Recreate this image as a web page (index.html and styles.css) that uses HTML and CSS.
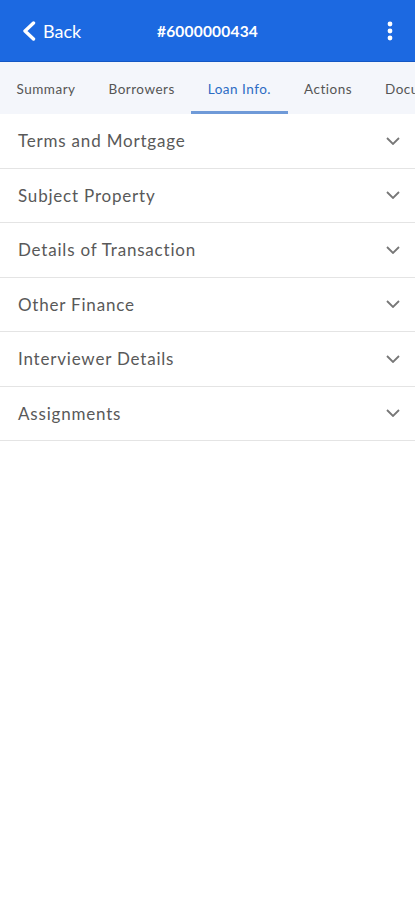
FILE: index.html
```html
<!DOCTYPE html>
<html lang="en">

<head>
    <meta charset="UTF-8">
    <meta name="viewport" content="width=device-width, initial-scale=1.0">
    <link rel="stylesheet" href="styles.css">
    <title>Loan Info</title>
</head>

<body>
    <header class="top-bar">
        <a class="back-link" href="#">
            <svg class="back-icon" width="14" height="20" viewBox="0 0 14 20">
                <path d="M11.5 2 L3 10 L11.5 18" fill="none" stroke="#fff" stroke-width="3.4" stroke-linecap="round" stroke-linejoin="round" />
            </svg>
            <span>Back</span>
        </a>
        <h1 class="loan-number">#6000000434</h1>
        <button class="menu-button" aria-label="More">
            <svg width="6" height="20" viewBox="0 0 6 20">
                <circle cx="3" cy="3" r="2.4" fill="#fff" />
                <circle cx="3" cy="10" r="2.4" fill="#fff" />
                <circle cx="3" cy="17" r="2.4" fill="#fff" />
            </svg>
        </button>
    </header>

    <!-- Tabs -->
    <nav class="tabs">
        <a class="tab" href="#">Summary</a>
        <a class="tab" href="#">Borrowers</a>
        <a class="tab tab-active" href="#">Loan Info.</a>
        <a class="tab" href="#">Actions</a>
        <a class="tab" href="#">Documents</a>
    </nav>

    <!-- Sections -->
    <main class="sections">
        <div class="section-row">
            <span>Terms and Mortgage</span>
            <svg class="chevron" width="14" height="8" viewBox="0 0 14 8"><path d="M1 1 L7 7 L13 1" /></svg>
        </div>
        <div class="section-row">
            <span>Subject Property</span>
            <svg class="chevron" width="14" height="8" viewBox="0 0 14 8"><path d="M1 1 L7 7 L13 1" /></svg>
        </div>
        <div class="section-row">
            <span>Details of Transaction</span>
            <svg class="chevron" width="14" height="8" viewBox="0 0 14 8"><path d="M1 1 L7 7 L13 1" /></svg>
        </div>
        <div class="section-row">
            <span>Other Finance</span>
            <svg class="chevron" width="14" height="8" viewBox="0 0 14 8"><path d="M1 1 L7 7 L13 1" /></svg>
        </div>
        <div class="section-row">
            <span>Interviewer Details</span>
            <svg class="chevron" width="14" height="8" viewBox="0 0 14 8"><path d="M1 1 L7 7 L13 1" /></svg>
        </div>
        <div class="section-row">
            <span>Assignments</span>
            <svg class="chevron" width="14" height="8" viewBox="0 0 14 8"><path d="M1 1 L7 7 L13 1" /></svg>
        </div>
    </main>
</body>

</html>
```

FILE: styles.css
```css
body {
    font-family: 'Lato', 'Open Sans', sans-serif;
    background: #fff;
    margin: 0;
    padding: 0;
    color: #555;
    overflow-x: hidden;
}

.top-bar {
    display: flex;
    align-items: center;
    justify-content: space-between;
    height: 61px;
    padding: 0 22px;
    background-color: #1c69e1;
    border-bottom: 1px solid #1457c4;
    color: #fff;
}

.back-link {
    display: flex;
    align-items: center;
    gap: 7px;
    width: 100px;
    color: #fff;
    text-decoration: none;
    font-size: 18px;
}

.loan-number {
    flex: 1;
    margin: 0;
    font-size: 15.5px;
    font-weight: 700;
    letter-spacing: 0.2px;
    text-align: center;
}

.menu-button {
    display: flex;
    justify-content: flex-end;
    width: 100px;
    background: none;
    border: none;
    padding: 0;
}

.tabs {
    display: flex;
    height: 52px;
    background-color: #f4f6fb;
    white-space: nowrap;
    overflow: hidden;
}

.tab {
    display: flex;
    align-items: center;
    padding: 4px 16.5px 0;
    font-size: 13.5px;
    letter-spacing: 0.5px;
    color: #555;
    text-decoration: none;
    border-bottom: 3px solid transparent;
}

.tab-active {
    color: #2d6cc4;
    border-bottom-color: #6f9ad8;
}

.section-row {
    display: flex;
    align-items: center;
    justify-content: space-between;
    box-sizing: border-box;
    height: 54.5px;
    padding: 0 15px 0 18px;
    border-bottom: 1px solid #e4e4e4;
    font-size: 17px;
    letter-spacing: 0.8px;
    color: #595959;
}

.chevron {
    fill: none;
    stroke: #777;
    stroke-width: 1.8;
}
```
